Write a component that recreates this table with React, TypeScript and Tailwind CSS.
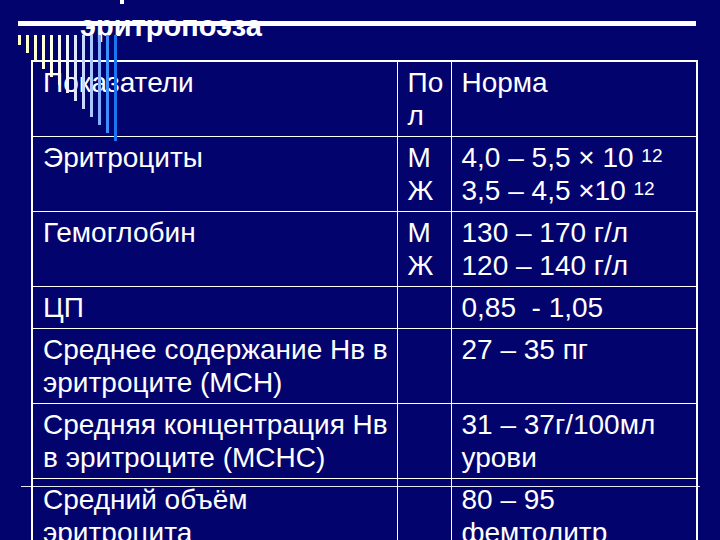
import type { ReactNode } from 'react';

type Row = { name: ReactNode[]; sex: ReactNode[]; norm: ReactNode[] };

const Sup = ({ children }: { children: ReactNode }) => (
    <span className="text-[19px] leading-none align-[5px]">{children}</span>
);

const rows: Row[] = [
    { name: ['Показатели'], sex: ['По', 'л'], norm: ['Норма'] },
    {
        name: ['Эритроциты'],
        sex: ['М', 'Ж'],
        norm: [
            <>4,0 – 5,5 × 10 <Sup>12</Sup></>,
            <>3,5 – 4,5 ×10 <Sup>12</Sup></>,
        ],
    },
    { name: ['Гемоглобин'], sex: ['М', 'Ж'], norm: ['130 – 170 г/л', '120 – 140 г/л'] },
    { name: ['ЦП'], sex: [], norm: ['0,85\u00a0\u00a0- 1,05'] },
    { name: ['Среднее содержание Нв в', 'эритроците (MCH)'], sex: [], norm: ['27 – 35 пг'] },
    { name: ['Средняя концентрация Нв', 'в эритроците (MCHC)'], sex: [], norm: ['31 – 37г/100мл', 'урови'] },
    { name: ['Средний объём', 'эритроцита'], sex: [], norm: ['80 – 95', 'фемтолитр'] },
];

// stripes at the top-left corner, from cream to blue
const stripes = [
    '#ffffc0', '#ffffc8', '#ffffd0', '#ffffd8', '#ffffe4', '#f8f8f0', '#f0f4ff',
    '#e0e8ff', '#c8d8ff', '#a8c8ff', '#80b0ff', '#3d8fff', '#1a75f0',
];

function Cell({ lines }: { lines: ReactNode[] }) {
    return (
        <td className="border border-white align-top pl-[10px] pr-[4px] pt-[4px] pb-[4px] whitespace-nowrap overflow-visible">
            {lines.map((l, i) => (
                <div key={i}>{l}</div>
            ))}
        </td>
    );
}

export default function App() {
    return (
        <div className="relative w-[720px] h-[540px] overflow-hidden bg-[#03036e] text-white font-['Liberation_Sans',Arial,sans-serif]">
            <div className="pt-[21px] pl-[18px]">
                <div className="h-[5px] w-[678px] bg-white" />
            </div>

            <div className="pl-[31px] pt-[34px]">
                <table className="table-fixed w-[665px] border-collapse border-2 border-white text-[28px] leading-[33px]">
                    <colgroup>
                        <col className="w-[365px]" />
                        <col className="w-[54px]" />
                        <col className="w-[246px]" />
                    </colgroup>
                    <tbody>
                        {rows.map((r, i) => (
                            <tr key={i}>
                                <Cell lines={r.name} />
                                <Cell lines={r.sex} />
                                <Cell lines={r.norm} />
                            </tr>
                        ))}
                    </tbody>
                </table>
            </div>

            {/* title, first line runs off the top of the slide */}
            <div className="absolute left-[80px] top-[9px] text-[29px] leading-[34px] font-bold">эритропоэза</div>
            <div className="absolute left-[120px] top-0 h-[4px] w-[4px] bg-white" />

            <div className="absolute left-[18px] top-[35px] flex gap-[5px]">
                {stripes.map((c, i) => (
                    <div key={c} className="w-[3px]" style={{ background: c, height: 10 + i * 8 }} />
                ))}
            </div>

            <div className="absolute left-[21px] top-[486px] h-px w-[679px] bg-white/90" />
        </div>
    );
}
